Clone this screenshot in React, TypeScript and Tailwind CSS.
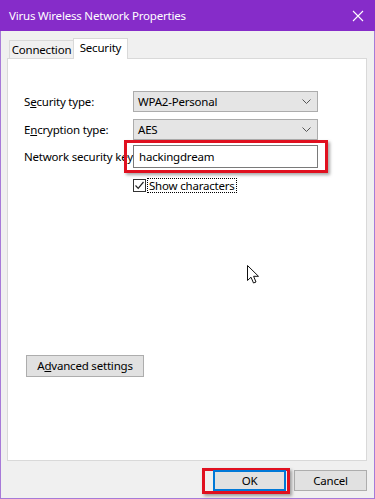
export default function App() {
  return (
    <div
      className="w-[375px] h-[499px] flex flex-col text-[11.5px] tracking-[-0.2px] text-black bg-[#f0f0f0]"
      style={{ fontFamily: '"Segoe UI", "Noto Sans", "Open Sans", sans-serif' }}
    >
      {/* Title bar */}
      <div className="h-[31px] flex items-center justify-between bg-[#862cc9] text-white pl-[9px] pr-[10px]">
        <span className="text-[11.5px]">Virus Wireless Network Properties</span>
        <svg width="12" height="12" viewBox="0 0 12 12" className="mr-[1px]">
          <path d="M1 1 L11 11 M11 1 L1 11" stroke="white" strokeWidth="1.1" />
        </svg>
      </div>

      {/* Body */}
      <div className="flex-1 flex flex-col border-x border-b border-[#a77ad8] pl-[6px] pr-[7px]">
        {/* Tabs */}
        <div className="h-[27px] flex items-end pl-[2px]">
          <div className="h-[18px] w-[65px] flex items-center justify-center border border-b-0 border-[#d9d9d9] bg-[#f0f0f0] -mr-px">
            Connection
          </div>
          <div className="h-[21px] w-[55px] pb-[2px] flex items-center justify-center border border-b-0 border-[#d9d9d9] bg-white relative top-px z-10">
            Security
          </div>
        </div>

        {/* Panel */}
        <div className="flex-1 flex flex-col relative bg-white border border-[#d9d9d9] pt-[32px] pb-[83px]">
          <div className="flex items-center h-[21px]">
            <span className="w-[125px] pl-[16px] shrink-0">
              S<span className="underline">e</span>curity type:
            </span>
            <Select value="WPA2-Personal" />
          </div>
          <div className="flex items-center h-[21px] mt-[7px]">
            <span className="w-[125px] pl-[16px] shrink-0">
              E<span className="underline">n</span>cryption type:
            </span>
            <Select value="AES" />
          </div>
          <div className="flex items-center h-[23px] mt-[5px]">
            <span className="w-[125px] pl-[16px] shrink-0 whitespace-nowrap">
              Network security key
            </span>
            <div className="relative w-[185px] h-[23px]">
              <div className="absolute -left-[9px] -right-[10px] -top-[5px] -bottom-[5px] border-[3px] border-[#e0101f] shadow-[2px_2px_3px_rgba(0,0,0,0.35)]" />
              <div className="relative w-full h-full bg-white border border-[#7a7a7a] flex items-center pl-[5px]">
                hackingdream
              </div>
            </div>
          </div>
          <div className="flex items-center mt-[10px] ml-[125px] h-[15px]">
            <div className="w-[13px] h-[13px] border border-[#333] bg-white flex items-center justify-center">
              <svg width="11" height="11" viewBox="0 0 11 11">
                <path d="M1.5 5.5 L4.2 8.3 L9.5 2" stroke="#222" strokeWidth="1.2" fill="none" />
              </svg>
            </div>
            <span className="ml-[1px] h-[15px] leading-[13px] px-[1px] border border-dotted border-black">
              Show characters
            </span>
          </div>

          {/* Mouse cursor */}
          <svg
            className="absolute left-[239px] top-[206px]"
            width="13"
            height="20"
            viewBox="0 0 13 20"
          >
            <path
              d="M0.5 0.5 L0.5 15.5 L4 12.2 L6.5 18 L9 17 L6.6 11.3 L11.5 11.3 Z"
              fill="white"
              stroke="#111"
              strokeWidth="1"
              strokeLinejoin="round"
            />
          </svg>

          <div className="mt-auto ml-[18px]">
            <button className="w-[118px] h-[22px] bg-[#e1e1e1] border border-[#adadad] text-[11.5px]">
              A<span className="underline">d</span>vanced settings
            </button>
          </div>
        </div>

        {/* Bottom buttons */}
        <div className="flex justify-end gap-[8px] pt-[9px] pb-[7px]">
          <div className="relative">
            <div className="absolute -left-[11px] -right-[4px] -top-[2px] -bottom-[3px] border-[3px] border-[#e0101f] shadow-[2px_2px_3px_rgba(0,0,0,0.35)]" />
            <button className="relative w-[73px] h-[21px] bg-[#e1e1e1] border-2 border-[#0078d7] text-[11.5px]">
              OK
            </button>
          </div>
          <button className="w-[73px] h-[21px] bg-[#e1e1e1] border border-[#adadad] text-[11.5px]">
            Cancel
          </button>
        </div>
      </div>
    </div>
  );
}

function Select({ value }: { value: string }) {
  return (
    <div className="w-[185px] h-[21px] bg-[#e5e5e5] border border-[#acacac] flex items-center justify-between pl-[4px] pr-[6px]">
      <span>{value}</span>
      <svg width="9" height="5" viewBox="0 0 9 5">
        <path d="M0.5 0.5 L4.5 4.5 L8.5 0.5" stroke="#555" strokeWidth="1" fill="none" />
      </svg>
    </div>
  );
}
